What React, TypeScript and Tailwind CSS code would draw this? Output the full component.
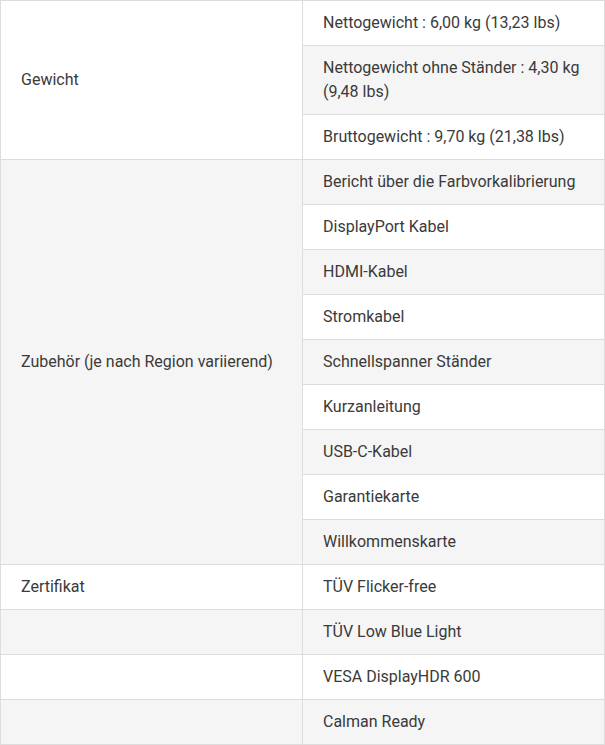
const rows: { label?: string; span?: number; value: string }[] = [
  { label: "Gewicht", span: 3, value: "Nettogewicht : 6,00 kg (13,23 lbs)" },
  { value: "Nettogewicht ohne Ständer : 4,30 kg (9,48 lbs)" },
  { value: "Bruttogewicht : 9,70 kg (21,38 lbs)" },
  { label: "Zubehör (je nach Region variierend)", span: 9, value: "Bericht über die Farbvorkalibrierung" },
  { value: "DisplayPort Kabel" },
  { value: "HDMI-Kabel" },
  { value: "Stromkabel" },
  { value: "Schnellspanner Ständer" },
  { value: "Kurzanleitung" },
  { value: "USB-C-Kabel" },
  { value: "Garantiekarte" },
  { value: "Willkommenskarte" },
  { label: "Zertifikat", span: 1, value: "TÜV Flicker-free" },
  { label: "", span: 1, value: "TÜV Low Blue Light" },
  { label: "", span: 1, value: "VESA DisplayHDR 600" },
  { label: "", span: 1, value: "Calman Ready" },
];

export default function App() {
  return (
    <div className="w-[605px] bg-white font-['Roboto',sans-serif] text-base leading-6 text-[#3a3a3a]">
      <table className="w-[605px] table-fixed border-collapse">
        <colgroup>
          <col className="w-[302px]" />
          <col />
        </colgroup>
        <tbody>
          {rows.map((row, index) => (
            <tr
              key={index}
              className={index % 2 === 1 ? "bg-[#f5f5f5]" : "bg-white"}
            >
              {row.label !== undefined && (
                <td
                  rowSpan={row.span}
                  className="border border-[#dddddd] px-5 py-[10px] align-middle"
                >
                  {row.label}
                </td>
              )}
              <td className="border border-[#dddddd] px-5 py-[10px]">
                {row.value}
              </td>
            </tr>
          ))}
        </tbody>
      </table>
    </div>
  );
}
